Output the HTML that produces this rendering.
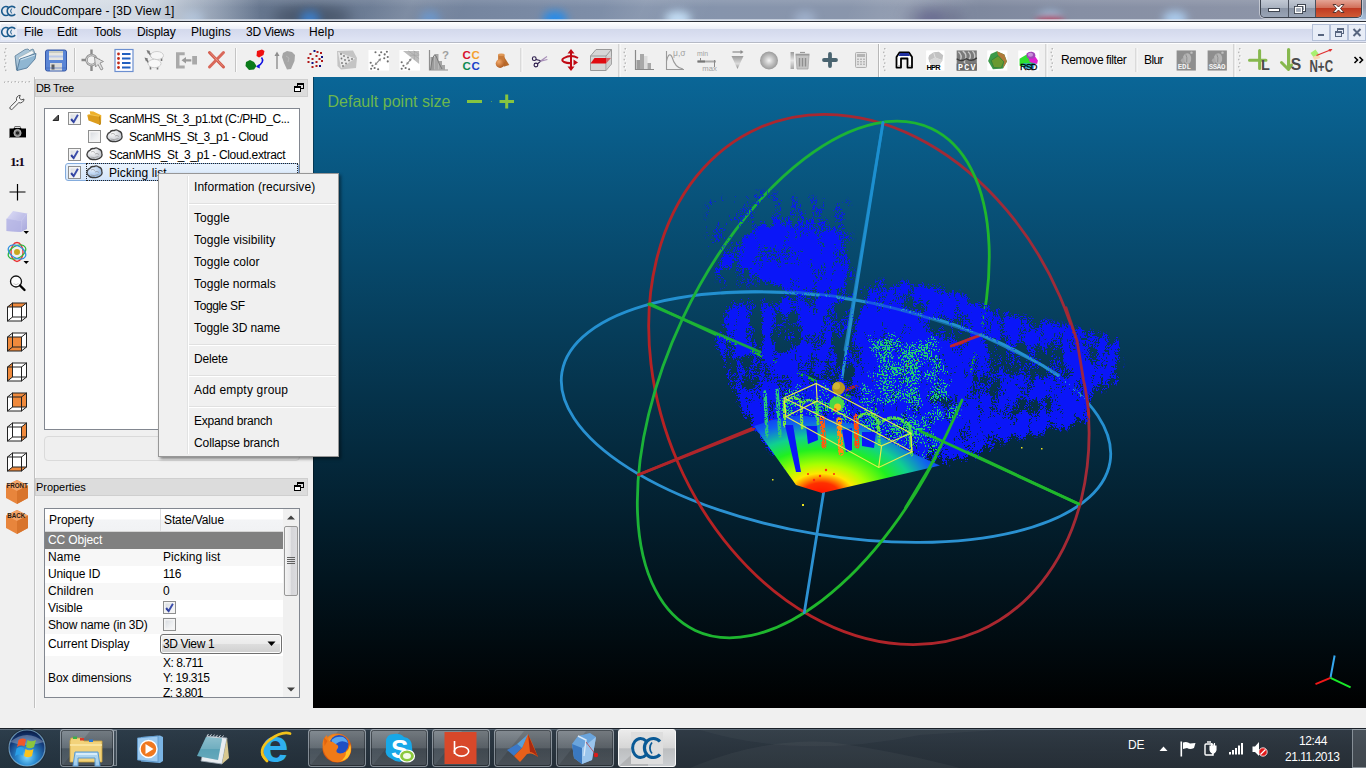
<!DOCTYPE html>
<html>
<head>
<meta charset="utf-8">
<title>CloudCompare - [3D View 1]</title>
<style>
html,body{margin:0;padding:0;}
body{width:1366px;height:768px;overflow:hidden;position:relative;background:#f0f0f0;font-family:"Liberation Sans",sans-serif;font-size:12px;color:#000;}
.abs{position:absolute;}
.t{position:absolute;white-space:nowrap;line-height:14px;}
#titlebar{left:0;top:0;width:1366px;height:21px;overflow:hidden;background:linear-gradient(90deg,#b4c0d0 0px,#a2afc2 120px,#7a8aa2 185px,#66768e 260px,#6a7a92 340px,#7686a0 480px,#7e8ea8 600px,#8694ac 720px,#8a96ac 880px,#7e889e 980px,#868fa4 1080px,#8a92a6 1200px,#9098aa 1366px);}
#titleline{left:0;top:21px;width:1366px;height:1px;background:#2b2f38;}
#menubar{left:0;top:22px;width:1366px;height:21px;box-sizing:border-box;border-bottom:1px solid #b6bac6;background:linear-gradient(#ffffff 0%,#f4f6fb 20%,#eceff8 34%,#d3d9ec 36%,#d9def0 65%,#e1e6f5 100%);}
#toolbar{left:0;top:43px;width:1366px;height:34px;background:#f0f0f0;border-top:1px solid #fff;box-sizing:border-box;}
#leftbar{left:0;top:77px;width:35px;height:631px;background:#f0f0f0;}
#view3d{left:313px;top:77px;width:1053px;height:631px;background:linear-gradient(#0a6697,#000);overflow:hidden;}
#statusbar{left:0;top:708px;width:1366px;height:20px;background:#f0f0f0;}
#taskbar{left:0;top:728px;width:1366px;height:40px;background:#3a4653;}
.docktitle{position:absolute;left:35px;width:273px;height:18px;background:#dcdcdc;border:1px solid #cfcfcf;box-sizing:border-box;}
.box{position:absolute;background:#fff;border:1px solid #828790;box-sizing:border-box;}

.chk{position:absolute;width:13px;height:13px;box-sizing:border-box;border:1px solid #8e8f8f;background:linear-gradient(135deg,#d2d6dc 0%,#eceef0 55%,#fbfbfb 100%);box-shadow:inset 0 0 0 1.500px #f4f4f4;}
.chk svg{position:absolute;left:-1px;top:-1px;}
.tr{font-size:12px;}
</style>
</head>
<body>
<div id="titlebar" class="abs"></div>
<div id="titleline" class="abs"></div>
<div id="menubar" class="abs"></div>
<div id="toolbar" class="abs"></div>
<div id="leftbar" class="abs"></div>
<div id="view3d" class="abs"></div>
<div id="statusbar" class="abs"></div>
<div id="taskbar" class="abs"></div>
<div class="abs" style="left:0;top:0;width:1366px;height:21px;overflow:hidden;">
<div class="abs" style="left:272px;top:6px;width:80px;height:22px;background:#2e3a4c;opacity:.55;filter:blur(7px);border-radius:50%;"></div>
<div class="abs" style="left:905px;top:8px;width:60px;height:20px;background:#4a4a70;opacity:.4;filter:blur(7px);border-radius:50%;"></div>
<div class="abs" style="left:182px;top:11px;width:22px;height:16px;background:#9cc0ea;opacity:0.55;filter:blur(4px);border-radius:50%;"></div>
<div class="abs" style="left:300px;top:11px;width:20px;height:16px;background:#3a86dc;opacity:0.80;filter:blur(4px);border-radius:50%;"></div>
<div class="abs" style="left:420px;top:11px;width:20px;height:16px;background:#5a9ae4;opacity:0.60;filter:blur(4px);border-radius:50%;"></div>
<div class="abs" style="left:543px;top:11px;width:24px;height:16px;background:#1f8cf0;opacity:0.90;filter:blur(4px);border-radius:50%;"></div>
<div class="abs" style="left:665px;top:11px;width:26px;height:16px;background:#c4e0f8;opacity:0.95;filter:blur(4px);border-radius:50%;"></div>
<div class="abs" style="left:794px;top:11px;width:22px;height:16px;background:#b4c8e6;opacity:0.50;filter:blur(4px);border-radius:50%;"></div>
<div class="abs" style="left:918px;top:11px;width:24px;height:16px;background:#5a5a88;opacity:0.50;filter:blur(4px);border-radius:50%;"></div>
<div class="abs" style="left:1038px;top:11px;width:24px;height:16px;background:#b4d0f0;opacity:0.70;filter:blur(4px);border-radius:50%;"></div>
<div class="abs" style="left:1163px;top:11px;width:24px;height:16px;background:#b0d4f8;opacity:0.85;filter:blur(4px);border-radius:50%;"></div>
<div class="abs" style="left:1350px;top:11px;width:20px;height:16px;background:#b0d4f8;opacity:0.70;filter:blur(4px);border-radius:50%;"></div>
<div class="abs" style="left:1035px;top:17px;width:30px;height:8px;background:#b01830;opacity:.8;filter:blur(3px);border-radius:50%;"></div>
<div class="abs" style="left:0;top:0;width:1366px;height:21px;background:linear-gradient(115deg,rgba(255,255,255,0) 0,rgba(255,255,255,0) 27%,rgba(255,255,255,.10) 30%,rgba(255,255,255,0) 34%,rgba(255,255,255,0) 44%,rgba(255,255,255,.08) 47%,rgba(255,255,255,0) 52%,rgba(255,255,255,0) 62%,rgba(255,255,255,.10) 66%,rgba(255,255,255,0) 71%,rgba(255,255,255,0) 100%);"></div>
<div class="abs" style="left:0;top:19px;width:1366px;height:2px;background:linear-gradient(rgba(225,232,242,.55),rgba(235,240,248,.9));"></div>
</div>
<div class="abs" style="left:0;top:0;width:260px;height:21px;background:linear-gradient(90deg,rgba(225,231,238,.95) 0%,rgba(215,222,231,.9) 55%,rgba(200,208,220,0) 100%);"></div>
<div class="abs" style="left:0;top:0;width:1366px;height:21px;background:linear-gradient(rgba(255,255,255,.10) 0%,rgba(255,255,255,0) 35%,rgba(0,0,0,0) 100%);"></div>
<svg class="abs" style="left:1px;top:3px" width="16" height="16" viewBox="0 0 16 16"><rect width="16" height="16" fill="#e3e7ee"/><path d="M7.6 4.6 A4 4.6 0 1 0 7.6 11.4" fill="none" stroke="#1a5a8c" stroke-width="1.5"/><path d="M14.2 4.9 A4.6 4.6 0 1 0 14.2 11.1" fill="none" stroke="#1a5a8c" stroke-width="1.6"/><path d="M10.6 5.6 A3.4 3.6 0 0 0 10.6 10.4" fill="none" stroke="#1a5a8c" stroke-width="1"/></svg>
<div class="t" id="ttl" style="left:21px;top:4px;font-size:12px;letter-spacing:0.03px;">CloudCompare - [3D View 1]</div>
<!-- caption buttons -->
<div class="abs" style="left:1260px;top:0;width:102px;height:18px;border:1px solid #3c434f;border-top:none;border-radius:0 0 5px 5px;box-sizing:border-box;overflow:hidden;box-shadow:0 0 0 1px rgba(255,255,255,.45);">
  <div class="abs" style="left:0;top:0;width:27px;height:17px;background:linear-gradient(#c2c9d4 0%,#a9b2c0 45%,#8b95a6 50%,#99a4b6 100%);border-right:1px solid #4a515e;"></div>
  <div class="abs" style="left:28px;top:0;width:26px;height:17px;background:linear-gradient(#c2c9d4 0%,#a9b2c0 45%,#8b95a6 50%,#99a4b6 100%);border-right:1px solid #4a515e;"></div>
  <div class="abs" style="left:55px;top:0;width:46px;height:17px;background:linear-gradient(#e4a495 0%,#d2705a 45%,#c03a22 50%,#cf5a35 100%);"></div>
</div>
<svg class="abs" style="left:1260px;top:0" width="102" height="18" viewBox="0 0 102 18">
 <rect x="8.5" y="8.5" width="11" height="3" fill="#fff" stroke="#3d4450" stroke-width="1"/>
 <rect x="37.500" y="4.500" width="8" height="7" fill="none" stroke="#3d4450" stroke-width="1"/><rect x="38.5" y="5.500" width="6" height="5" fill="none" stroke="#fff" stroke-width="1"/>
 <rect x="34.500" y="6.500" width="8" height="7" fill="#a4adbb" stroke="#3d4450" stroke-width="1"/><rect x="35.5" y="7.500" width="6" height="5" fill="none" stroke="#fff" stroke-width="1.2"/>
 <path d="M73 4.500 L76 4.500 L78.500 7 L81 4.500 L84 4.500 L80.500 8.500 L84 12.500 L81 12.500 L78.500 10 L76 12.500 L73 12.500 L76.500 8.500 Z" fill="#fff" stroke="#4a2a26" stroke-width="0.9"/>
</svg>

<svg class="abs" style="left:1px;top:24px" width="16" height="16" viewBox="0 0 16 16"><rect width="16" height="16" fill="#e9ecf4"/><path d="M7.6 4.6 A4 4.6 0 1 0 7.6 11.4" fill="none" stroke="#1a5a8c" stroke-width="1.5"/><path d="M14.2 4.9 A4.6 4.6 0 1 0 14.2 11.1" fill="none" stroke="#1a5a8c" stroke-width="1.6"/><path d="M10.6 5.6 A3.4 3.6 0 0 0 10.6 10.4" fill="none" stroke="#1a5a8c" stroke-width="1"/></svg><div class="t mi" id="m0" style="left:24px;top:25px;letter-spacing:-0.04px;">File</div>
<div class="t mi" id="m1" style="left:57px;top:25px;letter-spacing:-0.12px;">Edit</div>
<div class="t mi" id="m2" style="left:94px;top:25px;letter-spacing:-0.24px;">Tools</div>
<div class="t mi" id="m3" style="left:137px;top:25px;letter-spacing:-0.11px;">Display</div>
<div class="t mi" id="m4" style="left:191px;top:25px;letter-spacing:0.05px;">Plugins</div>
<div class="t mi" id="m5" style="left:246px;top:25px;letter-spacing:-0.28px;">3D Views</div>
<div class="t mi" id="m6" style="left:309px;top:25px;letter-spacing:0.13px;">Help</div>
<!-- mdi buttons -->
<svg class="abs" style="left:1312px;top:24px" width="54" height="18" viewBox="0 0 54 18">
 <g fill="#e8edf7" stroke="#b4c0d8" stroke-width="1"><rect x="0.500" y="0.500" width="17" height="16"/><rect x="18.500" y="0.500" width="17" height="16"/><rect x="36.500" y="0.500" width="17" height="16"/></g>
 <rect x="6" y="10" width="6" height="2" fill="#57657f"/>
 <g fill="none" stroke="#57657f" stroke-width="1"><rect x="25.500" y="4.500" width="6" height="5"/><rect x="23.500" y="7.500" width="6" height="5" fill="#dfe6f3"/></g><rect x="25" y="4" width="7" height="2" fill="#57657f"/><rect x="23" y="7" width="7" height="2" fill="#57657f"/>
 <path d="M41.500 5 L48.500 12 M48.500 5 L41.500 12" stroke="#57657f" stroke-width="2" fill="none"/>
</svg>

<!--TB_S--><svg class="abs" style="left:0;top:43px" width="1366" height="34" viewBox="0 43 1366 34">
<rect x="5.0" y="48.0" width="1.500" height="1.500" fill="#b8b8b8"/><rect x="6.5" y="49.0" width="1" height="1" fill="#fff"/><rect x="4.0" y="51.6" width="1.500" height="1.500" fill="#b8b8b8"/><rect x="5.5" y="52.6" width="1" height="1" fill="#fff"/><rect x="5.0" y="55.2" width="1.500" height="1.500" fill="#b8b8b8"/><rect x="6.5" y="56.2" width="1" height="1" fill="#fff"/><rect x="4.0" y="58.8" width="1.500" height="1.500" fill="#b8b8b8"/><rect x="5.5" y="59.8" width="1" height="1" fill="#fff"/><rect x="5.0" y="62.4" width="1.500" height="1.500" fill="#b8b8b8"/><rect x="6.5" y="63.4" width="1" height="1" fill="#fff"/><rect x="4.0" y="66.0" width="1.500" height="1.500" fill="#b8b8b8"/><rect x="5.5" y="67.0" width="1" height="1" fill="#fff"/><rect x="5.0" y="69.6" width="1.500" height="1.500" fill="#b8b8b8"/><rect x="6.5" y="70.6" width="1" height="1" fill="#fff"/><rect x="624.5" y="48.0" width="1.500" height="1.500" fill="#b8b8b8"/><rect x="626.0" y="49.0" width="1" height="1" fill="#fff"/><rect x="623.5" y="51.6" width="1.500" height="1.500" fill="#b8b8b8"/><rect x="625.0" y="52.6" width="1" height="1" fill="#fff"/><rect x="624.5" y="55.2" width="1.500" height="1.500" fill="#b8b8b8"/><rect x="626.0" y="56.2" width="1" height="1" fill="#fff"/><rect x="623.5" y="58.8" width="1.500" height="1.500" fill="#b8b8b8"/><rect x="625.0" y="59.8" width="1" height="1" fill="#fff"/><rect x="624.5" y="62.4" width="1.500" height="1.500" fill="#b8b8b8"/><rect x="626.0" y="63.4" width="1" height="1" fill="#fff"/><rect x="623.5" y="66.0" width="1.500" height="1.500" fill="#b8b8b8"/><rect x="625.0" y="67.0" width="1" height="1" fill="#fff"/><rect x="624.5" y="69.6" width="1.500" height="1.500" fill="#b8b8b8"/><rect x="626.0" y="70.6" width="1" height="1" fill="#fff"/><rect x="884.0" y="48.0" width="1.500" height="1.500" fill="#b8b8b8"/><rect x="885.5" y="49.0" width="1" height="1" fill="#fff"/><rect x="883.0" y="51.6" width="1.500" height="1.500" fill="#b8b8b8"/><rect x="884.5" y="52.6" width="1" height="1" fill="#fff"/><rect x="884.0" y="55.2" width="1.500" height="1.500" fill="#b8b8b8"/><rect x="885.5" y="56.2" width="1" height="1" fill="#fff"/><rect x="883.0" y="58.8" width="1.500" height="1.500" fill="#b8b8b8"/><rect x="884.5" y="59.8" width="1" height="1" fill="#fff"/><rect x="884.0" y="62.4" width="1.500" height="1.500" fill="#b8b8b8"/><rect x="885.5" y="63.4" width="1" height="1" fill="#fff"/><rect x="883.0" y="66.0" width="1.500" height="1.500" fill="#b8b8b8"/><rect x="884.5" y="67.0" width="1" height="1" fill="#fff"/><rect x="884.0" y="69.6" width="1.500" height="1.500" fill="#b8b8b8"/><rect x="885.5" y="70.6" width="1" height="1" fill="#fff"/><rect x="1051.5" y="48.0" width="1.500" height="1.500" fill="#b8b8b8"/><rect x="1053.0" y="49.0" width="1" height="1" fill="#fff"/><rect x="1050.5" y="51.6" width="1.500" height="1.500" fill="#b8b8b8"/><rect x="1052.0" y="52.6" width="1" height="1" fill="#fff"/><rect x="1051.5" y="55.2" width="1.500" height="1.500" fill="#b8b8b8"/><rect x="1053.0" y="56.2" width="1" height="1" fill="#fff"/><rect x="1050.5" y="58.8" width="1.500" height="1.500" fill="#b8b8b8"/><rect x="1052.0" y="59.8" width="1" height="1" fill="#fff"/><rect x="1051.5" y="62.4" width="1.500" height="1.500" fill="#b8b8b8"/><rect x="1053.0" y="63.4" width="1" height="1" fill="#fff"/><rect x="1050.5" y="66.0" width="1.500" height="1.500" fill="#b8b8b8"/><rect x="1052.0" y="67.0" width="1" height="1" fill="#fff"/><rect x="1051.5" y="69.6" width="1.500" height="1.500" fill="#b8b8b8"/><rect x="1053.0" y="70.6" width="1" height="1" fill="#fff"/><rect x="1239.0" y="48.0" width="1.500" height="1.500" fill="#b8b8b8"/><rect x="1240.5" y="49.0" width="1" height="1" fill="#fff"/><rect x="1238.0" y="51.6" width="1.500" height="1.500" fill="#b8b8b8"/><rect x="1239.5" y="52.6" width="1" height="1" fill="#fff"/><rect x="1239.0" y="55.2" width="1.500" height="1.500" fill="#b8b8b8"/><rect x="1240.5" y="56.2" width="1" height="1" fill="#fff"/><rect x="1238.0" y="58.8" width="1.500" height="1.500" fill="#b8b8b8"/><rect x="1239.5" y="59.8" width="1" height="1" fill="#fff"/><rect x="1239.0" y="62.4" width="1.500" height="1.500" fill="#b8b8b8"/><rect x="1240.5" y="63.4" width="1" height="1" fill="#fff"/><rect x="1238.0" y="66.0" width="1.500" height="1.500" fill="#b8b8b8"/><rect x="1239.5" y="67.0" width="1" height="1" fill="#fff"/><rect x="1239.0" y="69.6" width="1.500" height="1.500" fill="#b8b8b8"/><rect x="1240.5" y="70.6" width="1" height="1" fill="#fff"/><rect x="74.0" y="48" width="1" height="24" fill="#c4c4c4"/><rect x="75.0" y="48" width="1" height="24" fill="#fbfbfb"/><rect x="235.0" y="48" width="1" height="24" fill="#c4c4c4"/><rect x="236.0" y="48" width="1" height="24" fill="#fbfbfb"/><rect x="520.5" y="48" width="1" height="24" fill="#c4c4c4"/><rect x="521.5" y="48" width="1" height="24" fill="#fbfbfb"/><rect x="1135.5" y="48" width="1" height="24" fill="#c4c4c4"/><rect x="1136.5" y="48" width="1" height="24" fill="#fbfbfb"/><rect x="618.5" y="44" width="1" height="33" fill="#b8b8b8"/><rect x="619.5" y="44" width="1" height="33" fill="#fdfdfd"/><rect x="878.0" y="44" width="1" height="33" fill="#b8b8b8"/><rect x="879.0" y="44" width="1" height="33" fill="#fdfdfd"/><rect x="1045.5" y="44" width="1" height="33" fill="#b8b8b8"/><rect x="1046.5" y="44" width="1" height="33" fill="#fdfdfd"/><rect x="1233.5" y="44" width="1" height="33" fill="#b8b8b8"/><rect x="1234.5" y="44" width="1" height="33" fill="#fdfdfd"/><g transform="translate(13.0 48)"><path d="M2 8 L3 22 L5 23 L2.500 9 Z" fill="#6f8fa8"/><path d="M2 8 L12 1.500 L15 1 L16.500 2.500 L20 1 L21 3 L22 6 L12 12 L4 22 Z" fill="#a8c4d8" stroke="#5d7f99" stroke-width=".8"/><path d="M5 10 L19 2.500 L21 5 L8 13 Z" fill="#f4f6f8" stroke="#9aa" stroke-width=".5"/><path d="M4 22.500 L7 11 L23 5.500 L22 11 L14 20 Z" fill="#8fb6d2" stroke="#55799a" stroke-width=".9"/><path d="M7.500 12 L22 7" stroke="#cfe2ee" stroke-width="1"/></g>
<g transform="translate(44.0 48)"><rect x="1.500" y="2" width="21" height="21" rx="2" fill="#5b86d6" stroke="#3557a5" stroke-width="1"/><rect x="5" y="3" width="14" height="9" fill="#e6e6e0"/><rect x="5" y="7.500" width="14" height="2" fill="#b9c8e8"/><rect x="5" y="3" width="14" height="2" fill="#c9cdc4"/><rect x="6" y="15" width="12" height="7.500" fill="#d9d9d9"/><rect x="7.500" y="16.500" width="3" height="5" fill="#5a5a5a"/><path d="M1.500 20 L22.500 20" stroke="#3f64b5" stroke-width=".6"/></g>
<g transform="translate(81.0 48)"><g fill="none" stroke="#8a8a8a" stroke-width="2.400"><circle cx="10.500" cy="12" r="5"/><path d="M10.500 1.500 V7 M10.500 17 V23 M0.500 12 H5.500 M15.500 12 H19"/></g><g fill="none" stroke="#e8e8e8" stroke-width=".8"><circle cx="10.500" cy="12" r="5"/></g><path d="M13.500 9 L22.500 13.500 L19 15 L22 21 L20 22 L17 16.500 L14.500 19 Z" fill="#e0e0e0" stroke="#8c8c8c" stroke-width=".9"/></g>
<g transform="translate(112.0 48)"><rect x="3" y="1.500" width="18" height="22" fill="#fdfdff" stroke="#6c8fd0" stroke-width="1.200"/><g fill="#c02a1a"><circle cx="6.500" cy="6" r="1.400"/><circle cx="6.500" cy="10.500" r="1.400"/><circle cx="6.500" cy="15" r="1.400"/><circle cx="6.500" cy="19.500" r="1.400"/></g><g stroke="#1f5fc0" stroke-width="1.800"><path d="M10 6 H18.500 M10 10.500 H18.500 M10 15 H18.500 M10 19.500 H18.500"/></g></g>
<g transform="translate(143.0 48)"><g stroke="#777" stroke-width="1.600" fill="none"><path d="M5.500 4 L9 9 M3.500 11.500 L7 17 M7.500 21.500 L7.500 18 M14.500 21.500 L14.500 18 M18.500 13 L18.500 9.500"/></g><ellipse cx="14" cy="7.500" rx="6.500" ry="4" fill="#f6f6f6" stroke="#c4c4c4" stroke-width=".8"/><ellipse cx="11.500" cy="15.500" rx="6.500" ry="4.200" fill="#f8f8f8" stroke="#c4c4c4" stroke-width=".8"/><path d="M3.500 2 l3.500 1 l-2 3 z M1.500 9.500 l3.500 1 l-2 3 z" fill="#777"/></g>
<g transform="translate(174.0 48)"><path d="M2 4.200 H10.700 V7.200 H5.500 V17.600 H10.700 V20.600 H2 Z" fill="#a9a9a9"/><rect x="18.200" y="8" width="4.800" height="8.500" fill="#a9a9a9"/><path d="M7.500 12.300 L12 9 V11.200 H17.300 V13.400 H12 V15.600 Z" fill="#9a9a9a"/></g>
<g transform="translate(205.0 48)"><path d="M4.500 4.500 L18.500 19" stroke="#d35a4a" stroke-width="3" stroke-linecap="round"/><path d="M18.500 4.500 L4.500 19" stroke="#d9685a" stroke-width="3" stroke-linecap="round"/><path d="M5 4.500 L18 18.500" stroke="#eea398" stroke-width=".7"/></g>
<g transform="translate(242.0 48)"><path d="M15 3 L20 1.500 L22.500 3 L21.500 7 L17 9.500 L14.500 8 Z" fill="#f01010"/><path d="M4 14 L8 12 L12 14 L14.500 18 L12 21.500 L7 22 L3.500 18 Z" fill="#0a7a1a"/><path d="M19.500 9.500 Q23 14 15.500 18.500" fill="none" stroke="#1010e0" stroke-width="1.600"/><path d="M14 18.800 L17.500 16 L17.800 20.500 Z" fill="#1010e0"/></g>
<g transform="translate(273.0 48)"><path d="M4 21 V5" stroke="#8e8e8e" stroke-width="1.400"/><path d="M1.500 8 L4 3.500 L6.500 8 Z" fill="#8e8e8e"/><path d="M10 5 L14 3 L19 4 L22 7 L21.500 13 L18 21 L14 21.500 L11 15 L9 9 Z" fill="#a5a5a5"/><path d="M13 8 l3 2 l-1 4" stroke="#b8b8b8" fill="none"/></g>
<g transform="translate(304.0 48)"><rect x="9.5" y="2.0" width="2" height="2" fill="#101080"/><rect x="12.5" y="3.0" width="2" height="2" fill="#b01818"/><rect x="16.0" y="4.0" width="2" height="2" fill="#b01818"/><rect x="5.5" y="5.0" width="2" height="2" fill="#b01818"/><rect x="11.5" y="7.0" width="2" height="2" fill="#b01818"/><rect x="17.0" y="8.0" width="2" height="2" fill="#101080"/><rect x="3.5" y="9.0" width="2" height="2" fill="#b01818"/><rect x="7.5" y="10.0" width="2" height="2" fill="#b01818"/><rect x="14.5" y="10.0" width="2" height="2" fill="#b01818"/><rect x="17.0" y="12.0" width="2" height="2" fill="#b01818"/><rect x="3.5" y="13.0" width="2" height="2" fill="#b01818"/><rect x="7.5" y="14.0" width="2" height="2" fill="#101080"/><rect x="11.5" y="13.0" width="2" height="2" fill="#b01818"/><rect x="7.5" y="18.0" width="2" height="2" fill="#b01818"/><rect x="11.5" y="17.0" width="2" height="2" fill="#b01818"/><rect x="15.0" y="17.0" width="2" height="2" fill="#101080"/></g>
<g transform="translate(335.0 48)"><path d="M2 3 L18 2.500 L22 10 L21 20 L6 21.500 L2.500 18 Z" fill="#c4c4c4"/><path d="M3 4 L20 10.500 L6 20 Z" fill="#e9e9e9"/><g fill="#777"><circle cx="6" cy="6" r=".9"/><circle cx="9" cy="8" r=".9"/><circle cx="13" cy="9.500" r=".9"/><circle cx="6.500" cy="10.500" r=".9"/><circle cx="10" cy="12" r=".9"/><circle cx="14" cy="12.500" r=".9"/><circle cx="7" cy="15" r=".9"/><circle cx="11" cy="15.500" r=".9"/><circle cx="8" cy="18" r=".9"/><circle cx="17" cy="11" r=".9"/></g></g>
<g transform="translate(366.0 48)"><g transform="translate(2.5 2) scale(0.875)"><rect x="0" y="0" width="23.500" height="23.500" fill="#fff"/><circle cx="8.0" cy="2.5" r="1.200" fill="#6e6e6e"/><circle cx="14.5" cy="2.5" r="1.200" fill="#6e6e6e"/><circle cx="21.0" cy="2.0" r="1.200" fill="#6e6e6e"/><circle cx="12.5" cy="6.0" r="1.200" fill="#6e6e6e"/><circle cx="18.5" cy="5.0" r="1.200" fill="#6e6e6e"/><circle cx="22.0" cy="8.0" r="1.200" fill="#6e6e6e"/><circle cx="18.0" cy="9.5" r="1.200" fill="#6e6e6e"/><circle cx="22.0" cy="13.0" r="1.200" fill="#6e6e6e"/><circle cx="2.5" cy="14.5" r="1.200" fill="#6e6e6e"/><circle cx="4.5" cy="18.0" r="1.200" fill="#6e6e6e"/><circle cx="7.0" cy="20.5" r="1.200" fill="#6e6e6e"/><circle cx="3.0" cy="21.5" r="1.200" fill="#6e6e6e"/><circle cx="11.0" cy="22.0" r="1.200" fill="#6e6e6e"/><path d="M8 16.500 L13.500 10.500" stroke="#8c8c8c" stroke-width="1.300"/><path d="M7 17.500 l1 -3.500 l2.300 2.300 z M14.500 9.500 l-1 3.500 l-2.300 -2.300 z" fill="#8c8c8c"/></g></g>
<g transform="translate(397.0 48)"><g transform="translate(2.5 2) scale(0.875)"><rect x="0" y="0" width="23.500" height="23.500" fill="#fff"/><path d="M4 1 L22.500 1 L22.500 16 Z" fill="#bdbdbd"/><path d="M10 1 L22.500 10 M16 1 L22.500 5 M12 6 L22.500 6 M17 1 V11" stroke="#a2a2a2" stroke-width=".7"/><circle cx="2.5" cy="14.0" r="1.200" fill="#6e6e6e"/><circle cx="4.5" cy="18.0" r="1.200" fill="#6e6e6e"/><circle cx="2.5" cy="21.5" r="1.200" fill="#6e6e6e"/><circle cx="7.0" cy="20.5" r="1.200" fill="#6e6e6e"/><circle cx="11.0" cy="22.0" r="1.200" fill="#6e6e6e"/><path d="M8.500 16 L13 10.500" stroke="#8c8c8c" stroke-width="1.300"/><path d="M7.500 17 l1 -3.500 l2.300 2.300 z M14 9.500 l-1 3.500 l-2.300 -2.300 z" fill="#8c8c8c"/></g></g>
<g transform="translate(428.0 48)"><path d="M1.500 2 V22 H20" fill="none" stroke="#8e8e8e" stroke-width="1.200"/><rect x="2.500" y="9" width="4" height="13" fill="#9c9c9c"/><rect x="6.500" y="6" width="4" height="16" fill="#a6a6a6"/><rect x="10.500" y="13" width="3.500" height="9" fill="#a6a6a6"/><rect x="14" y="17" width="3" height="5" fill="#a6a6a6"/><path d="M2.500 22 Q5 3 8 8 Q11 16 14 21" fill="none" stroke="#7a7a7a" stroke-width="1"/><text x="14" y="11" font-family="Liberation Sans, sans-serif" font-size="11.500" font-weight="bold" fill="#a0a0a0">?</text></g>
<g transform="translate(459.0 48)"><text x="3.5" y="10.5" font-family="Liberation Sans, sans-serif" font-weight="bold" font-size="11.500" fill="#d8102c">C</text><text x="12.5" y="10.5" font-family="Liberation Sans, sans-serif" font-weight="bold" font-size="11.500" fill="#f5a030">C</text><text x="3.5" y="21.5" font-family="Liberation Sans, sans-serif" font-weight="bold" font-size="11.500" fill="#0f8a50">C</text><text x="12.5" y="21.5" font-family="Liberation Sans, sans-serif" font-weight="bold" font-size="11.500" fill="#2040c8">C</text></g>
<g transform="translate(490.0 48)"><defs><radialGradient id="pg" cx=".35" cy=".3" r=".8"><stop offset="0" stop-color="#f2a868"/><stop offset="1" stop-color="#a8541a"/></radialGradient></defs><g transform="translate(2.5 3.500) scale(0.8)"><path d="M14 6 L21 17 L14 19 Z" fill="#b86a2a"/><path d="M7 4 Q11 2.500 15 4 V13 H7 Z" fill="#c97a38"/><ellipse cx="11" cy="4" rx="4" ry="1.500" fill="#e09a58"/><circle cx="9.500" cy="15" r="5.500" fill="url(#pg)"/></g></g>
<g transform="translate(527.0 48)"><g transform="translate(3 3) scale(0.85)"><circle cx="5" cy="9" r="2.200" fill="none" stroke="#2a1a4a" stroke-width="1.300"/><circle cx="7" cy="16.500" r="2.200" fill="none" stroke="#2a1a4a" stroke-width="1.300"/><path d="M7 10 L13 11.500 M9 15 L13 11.500" stroke="#2a1a4a" stroke-width="1.200"/><path d="M12 12 L20 6.500 M12.500 12 L20.500 10" stroke="#a890b8" stroke-width="1.400"/></g></g>
<g transform="translate(559.0 48)"><g stroke="#c00a14" fill="none" stroke-width="2"><path d="M12 3 V21"/><path d="M19 10 Q12 6 5 10 Q1.500 12 5 14 Q9 15.500 13 15"/></g><path d="M8.500 5.500 L12 1 L15.500 5.500 Z M8.500 18.500 L12 23 L15.500 18.500 Z M14.500 11.500 L19 14.500 L14.500 17.500 Z" fill="#c00a14"/></g>
<g transform="translate(589.0 48)"><path d="M1.500 8 L7 1.500 H22.500 V16 L17 22.500 H1.500 Z" fill="#d6d6d6" stroke="#9a9a9a" stroke-width="1"/><path d="M1.500 8 H17 L22.500 1.500 M17 8 V22.500" fill="none" stroke="#9a9a9a" stroke-width="1"/><path d="M1.500 15.500 L5.500 10 H22 L17 15.500 Z" fill="#e00a10"/><path d="M17 8 H22.500 V16 L17 22.500 Z" fill="#c8c8c8" fill-opacity=".45"/></g>
<g transform="translate(632.0 48)"><path d="M3.500 2 V21.500 H22" fill="none" stroke="#8a8a8a" stroke-width="1.200"/><rect x="4.500" y="12" width="3.500" height="9" fill="#9c9c9c"/><rect x="8" y="6" width="4" height="15" fill="#a8a8a8"/><rect x="12" y="8" width="3.500" height="13" fill="#dcdcdc"/><rect x="15.500" y="15" width="3.500" height="6" fill="#a8a8a8"/></g>
<g transform="translate(663.0 48)"><path d="M3.500 3 V21.500 H21" fill="none" stroke="#9a9a9a" stroke-width="1.100"/><path d="M3.500 13 Q6 3 9 9 Q12 20 20 21" fill="none" stroke="#9a9a9a" stroke-width="1.100"/><text x="10" y="8" font-family="Liberation Sans, sans-serif" font-size="9" fill="#a2a2a2" textLength="12.500" lengthAdjust="spacingAndGlyphs">μ,σ</text></g>
<g transform="translate(694.0 48)"><text x="3" y="8" font-family="Liberation Sans, sans-serif" font-size="8" fill="#a2a2a2" textLength="11" lengthAdjust="spacingAndGlyphs">min</text><text x="8.300" y="23" font-family="Liberation Sans, sans-serif" font-size="8" fill="#a2a2a2" textLength="14.500" lengthAdjust="spacingAndGlyphs">max</text><path d="M3.500 13.500 H22" stroke="#aaa" stroke-width="2"/><path d="M3.500 13.500 H11" stroke="#777" stroke-width="2"/><path d="M6.500 10 V13 M20.500 12 V19" stroke="#8a8a8a" stroke-width="1"/></g>
<g transform="translate(725.0 48)"><defs><linearGradient id="fg" x1="0" y1="0" x2="0" y2="1"><stop offset="0" stop-color="#9a9a9a"/><stop offset=".6" stop-color="#dcdcdc"/><stop offset="1" stop-color="#8a8a8a"/></linearGradient></defs><path d="M6.500 8 H18.500 L12.500 21 Z" fill="url(#fg)"/><path d="M7.500 4 H17" stroke="#8a8a8a" stroke-width="1.200"/><path d="M15.500 2 L18.500 4 L15.500 6 Z" fill="#8a8a8a"/></g>
<g transform="translate(757.0 48)"><defs><radialGradient id="sg" cx=".5" cy=".5" r=".5"><stop offset="0" stop-color="#f4f4f4"/><stop offset=".5" stop-color="#c4c4c4"/><stop offset="1" stop-color="#9a9a9a"/></radialGradient></defs><circle cx="12" cy="12.500" r="9" fill="url(#sg)"/></g>
<g transform="translate(788.0 48)"><defs><linearGradient id="tg" x1="0" y1="0" x2="0" y2="1"><stop offset="0" stop-color="#9a9a9a"/><stop offset=".5" stop-color="#e6e6e6"/><stop offset="1" stop-color="#a6a6a6"/></linearGradient></defs><rect x="2.500" y="4" width="3.500" height="17" fill="url(#tg)"/><path d="M8 7 H21 L20 21 H9 Z" fill="#c4c4c4" stroke="#a4a4a4" stroke-width=".8"/><path d="M7.500 6.500 H21.500" stroke="#9a9a9a" stroke-width="1.600"/><path d="M12 4.500 H17" stroke="#9a9a9a" stroke-width="1.200"/><path d="M11.500 10 V18.500 M14.500 10 V18.500 M17.500 10 V18.500" stroke="#8e8e8e" stroke-width="1.400"/></g>
<g transform="translate(818.0 48)"><path d="M12 6 V18 M6 12 H18" stroke="#4a6470" stroke-width="3.800" stroke-linecap="round"/></g>
<g transform="translate(850.0 48)"><rect x="5.500" y="4.500" width="11" height="15" rx="1" fill="#e4e4e4" stroke="#b0b0b0" stroke-width="1"/><rect x="7" y="6" width="8" height="3" fill="#b4b4b4"/><g fill="#b8b8b8"><rect x="7" y="10.500" width="2" height="1.500"/><rect x="10" y="10.500" width="2" height="1.500"/><rect x="13" y="10.500" width="2" height="1.500"/><rect x="7" y="13" width="2" height="1.500"/><rect x="10" y="13" width="2" height="1.500"/><rect x="13" y="13" width="2" height="1.500"/><rect x="7" y="15.500" width="2" height="1.500"/><rect x="10" y="15.500" width="2" height="1.500"/><rect x="13" y="15.500" width="2" height="1.500"/></g></g>
<g transform="translate(892.0 48)"><path d="M4.500 9 L7.500 4.500 H17 L20 9 V19.500 H15.500 V10.500 H9 V19.500 H4.500 Z" fill="#fff" stroke="#000" stroke-width="1.800" stroke-linejoin="round"/><path d="M6.500 8 L8 5 H16.500 L18 8 Z" fill="#2030a0"/><path d="M5.500 17 H8 V18.800 H5.500 Z M16.500 17 H19 V18.800 H16.500 Z" fill="#d0d0d0"/></g>
<g transform="translate(923.0 48)"><g transform="translate(1.8 2) scale(0.875)"><rect x="1.500" y="0.500" width="21" height="23" fill="#fff"/><path d="M5 6 L10 2.500 L16 2 L21 6 L20 12 L16 18 L9 19 L5 13 L4 9 Z" fill="#c2c2c2"/><path d="M10 2.500 L12 9 L20 12 M12 9 L6 12 L9 19" stroke="#e4e4e4" stroke-width="1" fill="none"/><path d="M12 9 L20 12 L16 18 L9 19 L6 12 Z" fill="#d8d8d8"/><text x="2" y="22.500" font-family="Liberation Sans, sans-serif" font-weight="bold" font-size="8.500" fill="#000" textLength="16">HPR</text></g></g>
<g transform="translate(954.0 48)"><g transform="translate(1.8 2) scale(0.875)"><rect x="1" y="0.500" width="23" height="23" fill="#7a7a7a"/><path d="M3 2 Q8 6 5 12 M8 1 Q14 6 10 12 Q9 15 12 17 M14 2 Q19 6 15 11 M19 1 Q23 5 21 11" stroke="#c8c8c8" stroke-width="1.600" fill="none"/><path d="M1 10 Q6 14 12 10 Q18 14 24 9" stroke="#3a3a3a" stroke-width="1.500" fill="none"/><rect x="1" y="15.500" width="23" height="8" fill="#6a6a6a"/><text x="2.500" y="22.800" font-family="Liberation Mono, monospace" font-weight="bold" font-size="9.500" fill="#fff" textLength="20">PCV</text></g></g>
<g transform="translate(985.0 48)"><g transform="translate(1.8 2) scale(0.875)"><rect x="0.500" y="0.500" width="23" height="23" fill="#fff"/><path d="M11.500 1.500 L20 5 L23 13 L18.500 21 L7 22 L1.500 12.500 L4.500 4.500 Z" fill="#3d9a4a"/><path d="M11.500 1.500 L20 5 L23 13 L18.500 21 L19.500 13.500 L13 6.500 Z" fill="#b07a3a"/><path d="M13 6.500 L19.500 13.500 L16.500 20.500 L8 20 L5 12 Z" fill="#6a9a30" stroke="#2d7a3a" stroke-width=".8"/></g></g>
<g transform="translate(1016.0 48)"><g transform="translate(1.8 2) scale(0.875)"><rect x="0.500" y="0.500" width="24" height="23" fill="#fff"/><path d="M2 10 L12 4 L22 14 L14 21 L2 18 Z" fill="#30e030"/><path d="M10 4 L16 2 L23 12 L22 16 L14 14 Z" fill="#e020d0"/><ellipse cx="15" cy="6" rx="5" ry="4" fill="#a048b8"/><ellipse cx="14.500" cy="5.500" rx="3" ry="2.300" fill="#c890d8"/><path d="M6 15 L20 15 L18 22 L6 21 Z" fill="#30a0e0" fill-opacity=".8"/><text x="2.500" y="22.500" font-family="Liberation Sans, sans-serif" font-size="10.500" fill="#000" textLength="20" stroke="#000" stroke-width=".3">RSD</text></g></g>
<g transform="translate(1173.5 48)"><g transform="translate(1.8 2) scale(0.875)"><rect x="1.500" y="0.500" width="22" height="23" fill="#8e8e8e"/><path d="M9 7 Q11 3 15 4 Q19 6 18 12 Q17 16 13 16 Q10 14 9 11 Z" fill="#b4b4b4"/><path d="M6 12 Q8 8 10 10 Q12 14 9 16 Z" fill="#aaaaaa"/><circle cx="18.500" cy="3" r="1.400" fill="#c0c0c0"/><path d="M12 5 Q14 8 13 14" stroke="#8a8a8a" fill="none"/><text x="2.800" y="22" font-family="Liberation Mono, monospace" font-weight="bold" font-size="8.500" fill="#f4f4f4" textLength="15">EDL</text></g></g>
<g transform="translate(1204.5 48)"><g transform="translate(1.8 2) scale(0.875)"><rect x="1.500" y="0.500" width="22" height="23" fill="#8e8e8e"/><path d="M9 7 Q11 3 15 4 Q19 6 18 12 Q17 16 13 16 Q10 14 9 11 Z" fill="#b4b4b4"/><path d="M6 12 Q8 8 10 10 Q12 14 9 16 Z" fill="#aaaaaa"/><circle cx="18.500" cy="3" r="1.400" fill="#c0c0c0"/><path d="M12 5 Q14 8 13 14" stroke="#8a8a8a" fill="none"/><text x="2.800" y="22" font-family="Liberation Mono, monospace" font-weight="bold" font-size="8.500" fill="#f4f4f4" textLength="19">SSAO</text></g></g>
<g transform="translate(1248.0 48)"><path d="M11.600 2.500 V20.500 M1.500 12.200 H18" stroke="#86b84e" stroke-width="3" stroke-linecap="round"/><text x="13" y="21.500" font-family="Liberation Sans, sans-serif" font-weight="bold" font-size="14.500" fill="#4a4a4a">L</text></g>
<g transform="translate(1279.0 48)"><path d="M9.600 1.500 V20" stroke="#86b84e" stroke-width="3.200" stroke-linecap="round"/><path d="M2.500 14.500 L9.500 21.500 L12.500 17" fill="none" stroke="#86b84e" stroke-width="3" stroke-linecap="round" stroke-linejoin="round"/><text x="11.800" y="21.800" font-family="Liberation Sans, sans-serif" font-weight="bold" font-size="16.500" fill="#4a4a4a" textLength="10.500" lengthAdjust="spacingAndGlyphs">S</text></g>
<g transform="translate(1309.5 48)"><path d="M1 5 L6 1.500 L10 7 L4.500 10 Z" fill="#a8f070"/><path d="M3 9 L9 6.500 L11 10 L5 12 Z" fill="#f8d8b0"/><path d="M7 7.500 L22 1.500" stroke="#e03030" stroke-width="1.200"/><path d="M23 1 L19 1.200 L20.500 4 Z" fill="#e03030"/><text x="0" y="23.500" font-family="Liberation Sans, sans-serif" font-weight="bold" font-size="17" fill="#4a4a4a" textLength="23.500" lengthAdjust="spacingAndGlyphs">N+C</text></g>
<path d="M1354.500 57 L1357.500 60 L1354.500 63 M1359.500 57 L1362.500 60 L1359.500 63" fill="none" stroke="#000" stroke-width="1.600"/>
</svg>
<div class="t" style="left:1061px;top:53px;letter-spacing:-0.42px;" id="tb0">Remove filter</div><div class="t" style="left:1144px;top:53px;letter-spacing:-0.61px;" id="tb1">Blur</div>
<!--TB_E-->
<!--LB_S--><svg class="abs" style="left:0;top:77px" width="36" height="631" viewBox="0 77 36 631">
<rect x="34" y="77" width="1" height="631" fill="#c0c0c0"/><rect x="35" y="77" width="1" height="631" fill="#fafafa"/><rect x="4.0" y="81.5" width="1.500" height="1.500" fill="#b8b8b8"/><rect x="5.2" y="82.0" width="1" height="1" fill="#fff"/><rect x="7.5" y="81.0" width="1.500" height="1.500" fill="#b8b8b8"/><rect x="8.7" y="82.0" width="1" height="1" fill="#fff"/><rect x="11.0" y="81.5" width="1.500" height="1.500" fill="#b8b8b8"/><rect x="12.2" y="82.0" width="1" height="1" fill="#fff"/><rect x="14.5" y="81.0" width="1.500" height="1.500" fill="#b8b8b8"/><rect x="15.7" y="82.0" width="1" height="1" fill="#fff"/><rect x="18.0" y="81.5" width="1.500" height="1.500" fill="#b8b8b8"/><rect x="19.2" y="82.0" width="1" height="1" fill="#fff"/><rect x="21.5" y="81.0" width="1.500" height="1.500" fill="#b8b8b8"/><rect x="22.7" y="82.0" width="1" height="1" fill="#fff"/><rect x="25.0" y="81.5" width="1.500" height="1.500" fill="#b8b8b8"/><rect x="26.2" y="82.0" width="1" height="1" fill="#fff"/><rect x="28.5" y="81.0" width="1.500" height="1.500" fill="#b8b8b8"/><rect x="29.7" y="82.0" width="1" height="1" fill="#fff"/><g transform="translate(17 102.300) rotate(-45) scale(0.84)"><path d="M-9.500 -1.800 L1.200 -1.800 A4.600 4.600 0 0 1 8.600 -3.200 L5.600 -1.600 L5.600 1.600 L8.600 3.200 A4.600 4.600 0 0 1 1.200 1.800 L-9.500 1.800 A1.800 1.800 0 0 1 -9.500 -1.800 Z" fill="#f6f6f6" stroke="#4a4a4a" stroke-width="1.100"/></g><g><path d="M9.500 128.500 H13.500 L15 126 H20 L21.500 128.500 H26 V138 H9.500 Z" fill="#000"/><rect x="14.500" y="126.500" width="6" height="1.500" fill="#ddd"/><circle cx="17.500" cy="133" r="3.600" fill="#8a8a8a" stroke="#ccc" stroke-width=".8"/><circle cx="17.500" cy="133" r="1.800" fill="#222"/><rect x="9.500" y="137" width="16.500" height="1" fill="#888"/></g><text x="10" y="166" font-family="Liberation Serif, serif" font-weight="bold" font-size="13.500" fill="#1a0a1a" textLength="15">1:1</text><path d="M17.500 184 V200.500 M9.500 192 H25.500" stroke="#000" stroke-width="1.200"/><defs><linearGradient id="lc1" x1="0" y1="0" x2="1" y2="1"><stop offset="0" stop-color="#dcdcf6"/><stop offset="1" stop-color="#a8a8dc"/></linearGradient></defs>
<path d="M6.500 219 L13 211 L27 213.500 L27 229 L21 232 L6.500 231 Z" fill="url(#lc1)"/><path d="M6.500 219 L21 221 L27 213.500 M21 221 L21 232" stroke="#c8c8ee" stroke-width=".8" fill="none"/><path d="M6.500 219 L21 221 L21 232 L6.500 231 Z" fill="#b4b4e4" fill-opacity=".7"/><path d="M23.500 231 H29 L26.200 234 Z" fill="#000"/><g fill="none" stroke-width="1.300"><ellipse cx="17" cy="252" rx="6" ry="9.500" stroke="#e83030"/><ellipse cx="17" cy="252" rx="6" ry="9.500" transform="rotate(60 17 252)" stroke="#30b840"/><ellipse cx="17" cy="252" rx="6" ry="9.500" transform="rotate(-60 17 252)" stroke="#3090e0"/></g><circle cx="17" cy="252" r="3" fill="#c8a820"/><path d="M23.500 261 H29 L26.200 264 Z" fill="#000"/><circle cx="16" cy="281.500" r="5.500" fill="#fdfdfd" stroke="#111" stroke-width="1.300"/><path d="M13.500 283.500 Q16 286 18.500 283.500" stroke="#bbb" fill="none" stroke-width=".8"/><path d="M20 285.500 L24.500 290" stroke="#000" stroke-width="2.400" stroke-linecap="round"/><rect x="12.5" y="303.0" width="14" height="14" fill="#fff"/><rect x="7.5" y="307.0" width="14" height="14" fill="#fff"/><polygon points="7.5,307.0 21.5,307.0 26.5,303.0 12.5,303.0" fill="#f08a3c"/><g fill="none" stroke="#222" stroke-width="1"><rect x="12.5" y="303.0" width="14" height="14"/><rect x="7.5" y="307.0" width="14" height="14"/><path d="M7.5 307.0 L12.5 303.0 M21.5 307.0 L26.5 303.0 M7.5 321.0 L12.5 317.0 M21.5 321.0 L26.5 317.0"/></g>
<rect x="12.5" y="333.0" width="14" height="14" fill="#fff"/><rect x="7.5" y="337.0" width="14" height="14" fill="#fff"/><polygon points="7.5,337.0 21.5,337.0 21.5,351.0 7.5,351.0" fill="#f08a3c"/><g fill="none" stroke="#222" stroke-width="1"><rect x="12.5" y="333.0" width="14" height="14"/><rect x="7.5" y="337.0" width="14" height="14"/><path d="M7.5 337.0 L12.5 333.0 M21.5 337.0 L26.5 333.0 M7.5 351.0 L12.5 347.0 M21.5 351.0 L26.5 347.0"/></g>
<rect x="12.5" y="363.0" width="14" height="14" fill="#fff"/><rect x="7.5" y="367.0" width="14" height="14" fill="#fff"/><polygon points="7.5,367.0 12.5,363.0 12.5,377.0 7.5,381.0" fill="#f08a3c"/><g fill="none" stroke="#222" stroke-width="1"><rect x="12.5" y="363.0" width="14" height="14"/><rect x="7.5" y="367.0" width="14" height="14"/><path d="M7.5 367.0 L12.5 363.0 M21.5 367.0 L26.5 363.0 M7.5 381.0 L12.5 377.0 M21.5 381.0 L26.5 377.0"/></g>
<rect x="12.5" y="393.0" width="14" height="14" fill="#fff"/><rect x="7.5" y="397.0" width="14" height="14" fill="#fff"/><polygon points="12.5,393.0 26.5,393.0 26.5,407.0 12.5,407.0" fill="#f08a3c"/><g fill="none" stroke="#222" stroke-width="1"><rect x="12.5" y="393.0" width="14" height="14"/><rect x="7.5" y="397.0" width="14" height="14"/><path d="M7.5 397.0 L12.5 393.0 M21.5 397.0 L26.5 393.0 M7.5 411.0 L12.5 407.0 M21.5 411.0 L26.5 407.0"/></g>
<rect x="12.5" y="423.0" width="14" height="14" fill="#fff"/><rect x="7.5" y="427.0" width="14" height="14" fill="#fff"/><polygon points="21.5,427.0 26.5,423.0 26.5,437.0 21.5,441.0" fill="#f08a3c"/><g fill="none" stroke="#222" stroke-width="1"><rect x="12.5" y="423.0" width="14" height="14"/><rect x="7.5" y="427.0" width="14" height="14"/><path d="M7.5 427.0 L12.5 423.0 M21.5 427.0 L26.5 423.0 M7.5 441.0 L12.5 437.0 M21.5 441.0 L26.5 437.0"/></g>
<rect x="12.5" y="453.0" width="14" height="14" fill="#fff"/><rect x="7.5" y="457.0" width="14" height="14" fill="#fff"/><polygon points="7.5,471.0 21.5,471.0 26.5,467.0 12.5,467.0" fill="#f08a3c"/><g fill="none" stroke="#222" stroke-width="1"><rect x="12.5" y="453.0" width="14" height="14"/><rect x="7.5" y="457.0" width="14" height="14"/><path d="M7.5 457.0 L12.5 453.0 M21.5 457.0 L26.5 453.0 M7.5 471.0 L12.5 467.0 M21.5 471.0 L26.5 467.0"/></g>
<path d="M17.0 480.0 L28 485.5 L28 498.0 L17.0 504.0 L6 498.0 L6 485.5 Z" fill="#e8853c"/><path d="M17.0 480.0 L28 485.5 L17.0 491.0 L6 485.5 Z" fill="#f4a468"/><path d="M17.0 491.0 L28 485.5 L28 498.0 L17.0 504.0 Z" fill="#d8742c"/><text x="6.4" y="488.3" font-family="Liberation Sans, sans-serif" font-weight="bold" font-size="7" fill="#2a1a10" textLength="21.5" lengthAdjust="spacingAndGlyphs">FRONT</text><path d="M17.0 510.0 L28 515.5 L28 528.0 L17.0 534.0 L6 528.0 L6 515.5 Z" fill="#e8853c"/><path d="M17.0 510.0 L28 515.5 L17.0 521.0 L6 515.5 Z" fill="#f4a468"/><path d="M17.0 521.0 L28 515.5 L28 528.0 L17.0 534.0 Z" fill="#d8742c"/><text x="7.2" y="518.3" font-family="Liberation Sans, sans-serif" font-weight="bold" font-size="7" fill="#2a1a10" textLength="18.0" lengthAdjust="spacingAndGlyphs">BACK</text></svg>
<!--LB_E-->
<div class="docktitle" style="top:79px;"></div>
<div class="t" style="left:36px;top:81px;font-size:11px;letter-spacing:-0.38px;" id="dbt">DB Tree</div>
<svg class="abs" style="left:294px;top:83px" width="10" height="10" viewBox="0 0 10 10"><rect x="3.500" y="0.500" width="6" height="5" fill="#dcdcdc" stroke="#000"/><rect x="3" y="0" width="7" height="2" fill="#000"/><rect x="0.500" y="3.500" width="6" height="5" fill="#fff" stroke="#000"/><rect x="0" y="3" width="7" height="2" fill="#000"/></svg>
<div class="box" style="left:44px;top:108px;width:256px;height:322px;"></div>
<div class="abs" style="left:44px;top:436px;width:256px;height:25px;border:1px solid #dadada;border-radius:4px;box-sizing:border-box;background:#efefef;"></div>
<!-- selected row -->
<div class="abs" style="left:65px;top:163px;width:234px;height:18px;box-sizing:border-box;border:1px solid #84acdd;border-radius:3px;background:linear-gradient(#eaf3fd,#d3e5fa);"></div>
<div class="abs" style="left:86px;top:163px;width:212px;height:18px;box-sizing:border-box;border:1px dotted #222;"></div>
<svg class="abs" style="left:52px;top:114px" width="8" height="8" viewBox="0 0 8 8"><path d="M6.500 1 L6.500 6.500 L1 6.500 Z" fill="#595959" stroke="#262626" stroke-width="1"/></svg>
<div class="chk on" style="left:68px;top:112px;"><svg width="13" height="13" viewBox="0 0 13 13"><path d="M3.200 6.800 L5.700 10 L9.900 2.800" fill="none" stroke="#3b4daa" stroke-width="1.900" stroke-linejoin="miter"/><path d="M3 7.600 L5.600 10.300" stroke="#2c3c98" stroke-width="1.200" fill="none"/></svg></div>
<svg class="abs" style="left:87px;top:111px" width="16" height="14" viewBox="0 0 16 14"><path d="M2.800 0.300 L6.500 0.500 L9.500 2 L14.300 4.300 L14 12.800 L4 9 Z" fill="#eeb02a"/><path d="M0.300 4.300 L2 3.500 L12.600 5.300 L13.400 13.300 L12 13.600 L1.500 9.600 Z" fill="#dc9c1c"/><path d="M0.300 4.300 L2 3.500 L12.600 5.300" fill="none" stroke="#f6cc5a" stroke-width=".8"/><path d="M12.600 5.300 L13.400 13.300 L12 13.600" fill="none" stroke="#b07a10" stroke-width=".9"/></svg>
<div class="t tr" style="left:109px;top:112px;letter-spacing:-0.45px;" id="r1">ScanMHS_St_3_p1.txt (C:/PHD_C...</div>
<div class="chk" style="left:88px;top:130px;"></div>
<svg class="abs" style="left:106px;top:129px" width="17" height="14" viewBox="0 0 17 14"><defs><radialGradient id="cg1" cx="0.35" cy="0.3" r="0.8"><stop offset="0" stop-color="#ffffff"/><stop offset="1" stop-color="#b8bcc4"/></radialGradient></defs><path d="M3.800 3.500 Q5 1 8 1.600 Q10.500 -0.200 13 2.200 Q16 3 15.800 6.500 Q17 9.500 13.500 11.300 Q11 13.200 8 12.300 Q4.500 13.200 2.500 10.500 Q0 8.500 1.500 5.800 Q1.800 3.800 3.800 3.500 Z" fill="url(#cg1)" stroke="#3c3c3c" stroke-width="1.300"/><path d="M5 5 Q7 3.500 9 5.500 M9 7 Q11 5.500 13 7.500 M4.500 10 Q8 11.500 12.500 9.500" fill="none" stroke="#8a8a8a" stroke-width="1" opacity=".6"/></svg>
<div class="t tr" style="left:129px;top:130px;letter-spacing:-0.38px;" id="r2">ScanMHS_St_3_p1 - Cloud</div>
<div class="chk on" style="left:68px;top:148px;"><svg width="13" height="13" viewBox="0 0 13 13"><path d="M3.200 6.800 L5.700 10 L9.900 2.800" fill="none" stroke="#3b4daa" stroke-width="1.900" stroke-linejoin="miter"/><path d="M3 7.600 L5.600 10.300" stroke="#2c3c98" stroke-width="1.200" fill="none"/></svg></div>
<svg class="abs" style="left:86px;top:147px" width="17" height="14" viewBox="0 0 17 14"><defs><radialGradient id="cg2" cx="0.35" cy="0.3" r="0.8"><stop offset="0" stop-color="#ffffff"/><stop offset="1" stop-color="#b8bcc4"/></radialGradient></defs><path d="M3.800 3.500 Q5 1 8 1.600 Q10.500 -0.200 13 2.200 Q16 3 15.800 6.500 Q17 9.500 13.500 11.300 Q11 13.200 8 12.300 Q4.500 13.200 2.500 10.500 Q0 8.500 1.500 5.800 Q1.800 3.800 3.800 3.500 Z" fill="url(#cg2)" stroke="#3c3c3c" stroke-width="1.300"/><path d="M5 5 Q7 3.500 9 5.500 M9 7 Q11 5.500 13 7.500 M4.500 10 Q8 11.500 12.500 9.500" fill="none" stroke="#8a8a8a" stroke-width="1" opacity=".6"/></svg>
<div class="t tr" style="left:109px;top:148px;letter-spacing:-0.34px;" id="r3">ScanMHS_St_3_p1 - Cloud.extract</div>
<div class="chk on" style="left:68px;top:166px;"><svg width="13" height="13" viewBox="0 0 13 13"><path d="M3.200 6.800 L5.700 10 L9.900 2.800" fill="none" stroke="#3b4daa" stroke-width="1.900" stroke-linejoin="miter"/><path d="M3 7.600 L5.600 10.300" stroke="#2c3c98" stroke-width="1.200" fill="none"/></svg></div>
<svg class="abs" style="left:86px;top:165px" width="17" height="14" viewBox="0 0 17 14"><defs><radialGradient id="cg3" cx="0.35" cy="0.3" r="0.8"><stop offset="0" stop-color="#e8f2ff"/><stop offset="1" stop-color="#8fb4e0"/></radialGradient></defs><path d="M3.800 3.500 Q5 1 8 1.600 Q10.500 -0.200 13 2.200 Q16 3 15.800 6.500 Q17 9.500 13.500 11.300 Q11 13.200 8 12.300 Q4.500 13.200 2.500 10.500 Q0 8.500 1.500 5.800 Q1.800 3.800 3.800 3.500 Z" fill="url(#cg3)" stroke="#3c3c3c" stroke-width="1.300"/><path d="M5 5 Q7 3.500 9 5.500 M9 7 Q11 5.500 13 7.500 M4.500 10 Q8 11.500 12.500 9.500" fill="none" stroke="#8a8a8a" stroke-width="1" opacity=".6"/></svg>
<div class="t tr" style="left:109px;top:166px;letter-spacing:0.08px;" id="r4">Picking list</div>

<div class="docktitle" style="top:478px;"></div>
<div class="t" style="left:36px;top:480px;font-size:11px;letter-spacing:-0.04px;" id="prt">Properties</div>
<svg class="abs" style="left:294px;top:482px" width="10" height="10" viewBox="0 0 10 10"><rect x="3.500" y="0.500" width="6" height="5" fill="#dcdcdc" stroke="#000"/><rect x="3" y="0" width="7" height="2" fill="#000"/><rect x="0.500" y="3.500" width="6" height="5" fill="#fff" stroke="#000"/><rect x="0" y="3" width="7" height="2" fill="#000"/></svg>
<div class="box" style="left:44px;top:508px;width:256px;height:190px;overflow:hidden;" id="pbox">
 <div class="abs" style="left:0;top:0;width:238px;height:22px;background:linear-gradient(#fff 0%,#fff 45%,#f3f4f6 50%,#f1f2f4 100%);border-bottom:1px solid #d5d5d5;"></div>
 <div class="abs" style="left:115px;top:0;width:1px;height:22px;background:#dedfe1;"></div>
 <div class="abs" style="left:0;top:23px;width:238px;height:17px;background:#808080;"></div>
 <div class="abs" style="left:0;top:40px;width:238px;height:17px;background:#f7f7f7;"></div>
 <div class="abs" style="left:0;top:74px;width:238px;height:17px;background:#f7f7f7;"></div>
 <div class="abs" style="left:0;top:108px;width:238px;height:17px;background:#f7f7f7;"></div>
 <div class="abs" style="left:0;top:147px;width:238px;height:45px;background:#f7f7f7;"></div>
 <!-- scrollbar -->
 <div class="abs" style="left:238px;top:0;width:17px;height:188px;background:#f0f0f0;"></div>
 <div class="abs" style="left:239px;top:17px;width:14px;height:70px;box-sizing:border-box;border:1px solid #979797;border-radius:2px;background:linear-gradient(90deg,#f3f3f3 0%,#e6e6e8 45%,#d4d4d8 50%,#dcdcdf 100%);"></div>
 <div class="abs" style="left:242px;top:48px;width:8px;height:1px;background:#606060;box-shadow:0 2px 0 #606060,0 4px 0 #606060,0 6px 0 #606060;"></div>
 <svg class="abs" style="left:242px;top:6px" width="8" height="5" viewBox="0 0 8 5"><path d="M0 4.500 L4 0.500 L8 4.500 Z" fill="#404040"/></svg>
 <svg class="abs" style="left:242px;top:178px" width="8" height="5" viewBox="0 0 8 5"><path d="M0 0.500 L4 4.500 L8 0.500 Z" fill="#404040"/></svg>
</div>
<div class="t" style="left:49px;top:513px;letter-spacing:-0.06px;" id="p0">Property</div>
<div class="t" style="left:164px;top:513px;letter-spacing:-0.11px;" id="p1">State/Value</div>
<div class="t" style="left:48px;top:533px;color:#fff;letter-spacing:-0.13px;" id="p2">CC Object</div>
<div class="t" style="left:48px;top:550px;letter-spacing:0.12px;" id="p3">Name</div><div class="t" style="left:163px;top:550px;letter-spacing:0.07px;" id="p4">Picking list</div>
<div class="t" style="left:48px;top:567px;letter-spacing:-0.13px;" id="p5">Unique ID</div><div class="t" style="left:163px;top:567px;letter-spacing:-0.31px;" id="p6">116</div>
<div class="t" style="left:48px;top:584px;letter-spacing:0.11px;" id="p7">Children</div><div class="t" style="left:163px;top:584px;letter-spacing:0.01px;" id="p8">0</div>
<div class="t" style="left:48px;top:601px;letter-spacing:-0.08px;" id="p9">Visible</div><div class="chk on" style="left:163px;top:601px;"><svg width="13" height="13" viewBox="0 0 13 13"><path d="M3.200 6.800 L5.700 10 L9.900 2.800" fill="none" stroke="#3b4daa" stroke-width="1.900" stroke-linejoin="miter"/><path d="M3 7.600 L5.600 10.300" stroke="#2c3c98" stroke-width="1.200" fill="none"/></svg></div>
<div class="t" style="left:48px;top:618px;letter-spacing:-0.18px;" id="p10">Show name (in 3D)</div><div class="chk" style="left:163px;top:618px;"></div>
<div class="t" style="left:48px;top:637px;letter-spacing:-0.08px;" id="p11">Current Display</div>
<div class="abs" style="left:160px;top:634px;width:122px;height:20px;box-sizing:border-box;border:1px solid #707070;border-radius:3px;background:linear-gradient(#f2f2f2 0%,#ebebeb 48%,#dddddd 52%,#cfcfcf 100%);box-shadow:inset 0 0 0 1px #fcfcfc;"></div>
<div class="t" style="left:163px;top:637px;letter-spacing:-0.36px;" id="p12">3D View 1</div>
<svg class="abs" style="left:267px;top:641px" width="9" height="6" viewBox="0 0 9 6"><path d="M0.500 0.500 L8.500 0.500 L4.500 5 Z" fill="#000"/></svg>
<div class="t" style="left:48px;top:671px;letter-spacing:-0.09px;" id="p13">Box dimensions</div>
<div class="t" style="left:163px;top:656px;letter-spacing:-0.48px;" id="p14">X: 8.711</div>
<div class="t" style="left:163px;top:671px;letter-spacing:-0.47px;" id="p15">Y: 19.315</div>
<div class="abs" style="left:163px;top:686px;height:11px;overflow:hidden;width:80px;"><div class="t" style="left:0;top:0;letter-spacing:-0.50px;" id="p16">Z: 3.801</div></div>

<!--SCENE_S--><svg class="abs" style="left:313px;top:77px" width="1053" height="631" viewBox="313 77 1053 631">
<defs>
<filter id="pc" x="-5%" y="-5%" width="110%" height="110%" color-interpolation-filters="sRGB">
 <feGaussianBlur in="SourceAlpha" stdDeviation="2.5" result="d"/>
 <feComponentTransfer in="d" result="dm"><feFuncA type="linear" slope="6" intercept="-0.05"/></feComponentTransfer>
 <feTurbulence type="fractalNoise" baseFrequency="0.61 0.57" numOctaves="2" seed="4" result="t1"/>
 <feColorMatrix in="t1" type="matrix" values="0 0 0 0 0  0 0 0 0 0  0 0 0 0 0  3 0 0 0 -1" result="hi"/>
 <feTurbulence type="fractalNoise" baseFrequency="0.11 0.045" numOctaves="3" seed="11" result="t2"/>
 <feColorMatrix in="t2" type="matrix" values="0 0 0 0 0  0 0 0 0 0  0 0 0 0 0  2.6 0 0 0 -0.8" result="lo"/>
 <feComposite in="d" in2="lo" operator="arithmetic" k1="0" k2="0.4" k3="0.3" k4="0" result="m1"/>
 <feComposite in="m1" in2="hi" operator="arithmetic" k1="0" k2="1" k3="0.3" k4="0" result="m2"/>
 <feComponentTransfer in="m2" result="mask0"><feFuncA type="linear" slope="40" intercept="-20"/></feComponentTransfer>
 <feComposite in="mask0" in2="dm" operator="in" result="mask"/>
 <feFlood flood-color="#0a16f8" result="c"/>
 <feComposite in="c" in2="mask" operator="in"/>
</filter>
<filter id="pcg" x="-5%" y="-5%" width="110%" height="110%" color-interpolation-filters="sRGB">
 <feGaussianBlur in="SourceAlpha" stdDeviation="6" result="d"/>
 <feComponentTransfer in="d" result="dm"><feFuncA type="linear" slope="6" intercept="-0.05"/></feComponentTransfer>
 <feTurbulence type="fractalNoise" baseFrequency="0.67 0.59" numOctaves="2" seed="23" result="t1"/>
 <feColorMatrix in="t1" type="matrix" values="0 0 0 0 0  0 0 0 0 0  0 0 0 0 0  0 3 0 0 -1" result="hi"/>
 <feTurbulence type="fractalNoise" baseFrequency="0.05" numOctaves="2" seed="5" result="t2"/>
 <feColorMatrix in="t2" type="matrix" values="0 0 0 0 0  0 0 0 0 0  0 0 0 0 0  2.6 0 0 0 -0.8" result="lo"/>
 <feComposite in="d" in2="lo" operator="arithmetic" k1="0" k2="0.4" k3="0.25" k4="0" result="m1"/>
 <feComposite in="m1" in2="hi" operator="arithmetic" k1="0" k2="1" k3="0.35" k4="0" result="m2"/>
 <feComponentTransfer in="m2" result="mask0"><feFuncA type="linear" slope="40" intercept="-25.6"/></feComponentTransfer>
 <feComposite in="mask0" in2="dm" operator="in" result="mask"/>
 <feFlood flood-color="#20d070" result="c"/>
 <feComposite in="c" in2="mask" operator="in"/>
</filter>
<filter id="spk" x="-5%" y="-5%" width="110%" height="110%" color-interpolation-filters="sRGB">
 <feTurbulence type="fractalNoise" baseFrequency="0.7 0.6" numOctaves="2" seed="9" result="t"/>
 <feColorMatrix in="t" type="matrix" values="0 0 0 0 0  0 0 0 0 0  0 0 0 0 0  0 0 14 0 -5.1" result="m"/>
 <feComposite in="SourceGraphic" in2="m" operator="in"/>
</filter>
<radialGradient id="fan" gradientUnits="userSpaceOnUse" cx="821" cy="494" r="150" gradientTransform="translate(821 494) scale(1 0.62) translate(-821 -494)">
 <stop offset="0" stop-color="#ff1000"/><stop offset="0.12" stop-color="#ff3000"/><stop offset="0.22" stop-color="#ffe800"/><stop offset="0.32" stop-color="#a8ff00"/><stop offset="0.48" stop-color="#20f020"/><stop offset="0.62" stop-color="#10d090"/><stop offset="0.78" stop-color="#1060f0"/><stop offset="1" stop-color="#0a16f8"/>
</radialGradient>
<linearGradient id="esr" gradientUnits="userSpaceOnUse" x1="0" y1="110" x2="0" y2="650"><stop offset="0" stop-color="#9c2d3c"/><stop offset="1" stop-color="#ba2020"/></linearGradient>
<linearGradient id="esg" gradientUnits="userSpaceOnUse" x1="0" y1="110" x2="0" y2="650"><stop offset="0" stop-color="#18b040"/><stop offset="1" stop-color="#22ba22"/></linearGradient>
<linearGradient id="esb" gradientUnits="userSpaceOnUse" x1="0" y1="110" x2="0" y2="650"><stop offset="0" stop-color="#1a8fd0"/><stop offset="1" stop-color="#3092d2"/></linearGradient>
</defs>
<g fill="none" stroke-width="2.8" stroke-linecap="round">
<ellipse cx="836" cy="417.100" rx="277.700" ry="118.600" transform="rotate(9.3 836 417.100)" stroke="url(#esb)"/>
<ellipse cx="868.900" cy="379.500" rx="274.600" ry="208.300" transform="rotate(66.5 868.900 379.500)" stroke="url(#esr)"/>
<ellipse cx="813.300" cy="379.500" rx="277.300" ry="144.200" transform="rotate(-64.8 813.300 379.500)" stroke="url(#esg)"/>
<path d="M883 122.600 L804.300 612.600" stroke="url(#esb)"/>
<path d="M638.400 474.800 L980.400 335.100" stroke="url(#esr)"/>
<path d="M649.900 303.700 L1078.800 504" stroke="url(#esg)"/>
</g>
<mask id="hm" maskUnits="userSpaceOnUse" x="690" y="180" width="460" height="340"><rect x="690" y="180" width="460" height="340" fill="#fff"/><g fill="#000" fill-opacity=".72"><polygon points="925,318 964,321 975,343 932,341"/><polygon points="986,337 1064,350 1068,377 1031,378 989,371"/><polygon points="972,375 1003,378 1000,397 970,395"/><polygon points="931,392 956,397 953,406 928,403"/><polygon points="1087,347 1095,348 1095,366 1087,364"/><polygon points="1102,350 1108,351 1108,368 1102,367"/><polygon points="749,307 761,306 762,343 750,351"/><polygon points="772,312 799,314 804,343 780,354 769,338"/><polygon points="829,300 856,306 852,381 838,381 833,343"/><polygon points="1010,400 1050,398 1052,410 1012,414"/><polygon points="905,300 925,303 926,314 906,312"/></g></mask>
<g filter="url(#pc)"><g mask="url(#hm)"><polygon points="706,200 760,190 850,200 856,280 720,290 706,250" fill="#000" fill-opacity="0.14" /><polygon points="725,300 860,290 880,280 940,284 1000,310 1120,338 1122,380 1095,395 1085,425 1005,442 975,458 940,466 905,450 860,425 800,400 730,395 722,350" fill="#000" fill-opacity="0.38" /><polygon points="739,238 779,224 836,233 849,260 845,290 801,295 743,268" fill="#000" fill-opacity="0.98" /><polygon points="752,226 800,216 840,228 846,246 748,246" fill="#000" fill-opacity="0.45" /><polygon points="718,256 732,256 732,272 718,272" fill="#000" fill-opacity="0.80" /><polygon points="728,306 750,304 752,353 730,357" fill="#000" fill-opacity="0.90" /><polygon points="714,335 728,335 728,351 714,351" fill="#000" fill-opacity="0.75" /><polygon points="761,304 845,295 849,357 823,375 779,370 756,348" fill="#000" fill-opacity="0.80" /><polygon points="758,350 800,350 812,392 770,396 752,372" fill="#000" fill-opacity="0.55" /><polygon points="860,308 876,291 911,284 938,291 956,295 973,304 1000,317 1044,326 1089,333 1117,344 1115,375 1089,388 1080,419 1058,428 1000,437 973,455 938,460 900,455 866,430 856,380" fill="#000" fill-opacity="0.86" /><polygon points="864,300 960,304 978,400 944,450 884,452 858,410" fill="#000" fill-opacity="0.97" /><polygon points="1062,336 1118,345 1114,374 1088,392 1066,388" fill="#000" fill-opacity="0.97" /><polygon points="990,400 1070,396 1078,420 1000,436" fill="#000" fill-opacity="0.92" /><polygon points="840,330 862,320 862,410 840,396" fill="#000" fill-opacity="0.50" /><polygon points="735,392 760,384 830,382 862,420 905,452 880,470 822,488 790,470 752,428" fill="#000" fill-opacity="0.92" /></g></g>
<g filter="url(#pcg)"><polygon points="868,330 950,340 960,420 930,455 880,455 860,400" fill="#000" fill-opacity="0.62" /><polygon points="770,385 830,380 880,440 850,470 790,440" fill="#000" fill-opacity="0.60" /></g>
<polygon points="754,426 772,420 800,415 860,425 905,450 940,465.500 822,493 796,485" fill="url(#fan)"/>
<g fill="none" stroke-linecap="round" filter="url(#spk)">
<path d="M765 392 L767 436 M777 390 L780 436" stroke="#28c878" stroke-width="3.500"/>
<path d="M784.500 426 V402 Q792 393 801 402 L802 428" stroke="#7ae838" stroke-width="3"/>
<path d="M802 404 Q810 396 817 405 L818 424" stroke="#58e040" stroke-width="2.800"/>
<path d="M822 418 L824 446" stroke="#ff5a10" stroke-width="5"/>
<path d="M839 420 L841 453" stroke="#ff8a10" stroke-width="5.500"/>
<path d="M856 416 L857 446" stroke="#ff4a10" stroke-width="5"/>
<path d="M858 418 Q868 408 878 420 L879.500 446" stroke="#60e040" stroke-width="3"/>
<path d="M881 422 Q896 412 910 426 L911.500 455" stroke="#50e048" stroke-width="3"/>
</g>
<circle cx="836.700" cy="404" r="7.500" fill="#48d848"/><circle cx="837.500" cy="407" r="3.500" fill="#f0c020"/><circle cx="835" cy="410" r="1.800" fill="#ff3010"/>
<g fill="#0a16f8"><polygon points="785,425 793,425 801,472 796,472"/><polygon points="806,426 817,426 818,440 808,444"/><polygon points="842,430 852,428 852,450 846,452"/><polygon points="862,432 876,432 874,448 862,446"/></g>
<g fill="#ff2a10"><circle cx="814" cy="480" r="1.200"/><circle cx="820" cy="476" r="1.200"/><circle cx="808" cy="474" r="1"/><circle cx="826" cy="470" r="1.200"/><circle cx="834" cy="474" r="1"/></g>
<circle cx="838.500" cy="388" r="6.500" fill="#b89a20"/><circle cx="836.500" cy="386" r="3.500" fill="#d8c040" fill-opacity=".7"/>
<g fill="none" stroke="#e6ee4c" stroke-width="1.150">
<path d="M816.200 383.400 L910.900 433.200 L881.600 445.900 L784 398.100 Z"/>
<path d="M817.200 401 L911.900 451.800 L878.700 467.400 L785.900 416.600 Z"/>
<path d="M816.200 383.400 L817.200 401 M910.900 433.200 L911.900 451.800 M881.600 445.900 L878.700 467.400 M784 398.100 L785.900 416.600"/>
</g>
<g fill="none" stroke-width="2.8" stroke-linecap="round">
<path d="M962.100 400 Q946 438 927.500 471.100 L905.600 507.600" stroke="url(#esg)"/>
<path d="M1066 307.800 L1077 340.600 L1083.500 380 Q1086.500 392 1089 416.500" stroke="url(#esr)" stroke-opacity=".9"/>
<path d="M1078.800 504 L920.200 431" stroke="url(#esg)"/>
<path d="M648.600 304.200 L760 352" stroke="url(#esg)" stroke-opacity=".9"/>
<path d="M951.200 346 L980.400 335.100" stroke="#c0262e"/>
<path d="M638.400 474.800 L753.300 429.200" stroke="url(#esr)"/>
<path d="M883 122.600 L845 350" stroke="url(#esb)" stroke-opacity=".75"/>
<path d="M722 293.200 Q759 291 795 292.100 Q818 294 840 296.900 Q876 303 913 313.300 Q950 324 980.400 335.100" stroke="url(#esb)" stroke-opacity=".55"/>
<path d="M980.400 335.100 Q1015 351 1044 366.100 L1058.700 375.200" stroke="url(#esb)" stroke-opacity=".8"/>
</g>
<g fill="#e8e020"><rect x="802" y="504" width="2" height="2"/><rect x="1021" y="447" width="1.500" height="1.500"/><rect x="1041" y="448" width="1.500" height="1.500"/><rect x="772" y="479" width="1.500" height="1.500"/></g>
<g fill="none" stroke-width="2" stroke-linecap="butt">
<path d="M1330.500 677.800 L1334.600 655.500" stroke="#35a8f0"/>
<path d="M1330.500 677.800 L1315.500 684.200" stroke="#f01818"/>
<path d="M1330.500 677.800 L1350.600 687.400" stroke="#18e828"/>
</g>
<text x="327.500" y="107" font-family="Liberation Sans, sans-serif" font-size="16.500" fill="#7cc444" fill-opacity=".88" textLength="123" lengthAdjust="spacingAndGlyphs">Default point size</text>
<rect x="467" y="100" width="15" height="3" fill="#86c440"/>
<rect x="499.500" y="100" width="14.500" height="3" fill="#86c440"/><rect x="505.200" y="94.500" width="3" height="14" fill="#86c440"/>
<rect x="491" y="101" width="1" height="1" fill="#86c440" fill-opacity=".6"/>
<rect x="313" y="77" width="1" height="631" fill="#000" fill-opacity=".35"/>
</svg>
<!--SCENE_E-->
<div class="abs" style="left:158px;top:173px;width:181px;height:284px;box-sizing:border-box;background:#f0f0f0;border:1px solid #979797;box-shadow:2px 2px 3px rgba(0,0,0,.45);"></div>
<div class="abs" style="left:187px;top:176px;width:1px;height:278px;background:#e2e3e3;"></div><div class="abs" style="left:188px;top:176px;width:1px;height:278px;background:#fff;"></div>
<div class="abs" style="left:189px;top:203px;width:147px;height:1px;background:#e0e0e0;"></div><div class="abs" style="left:189px;top:204px;width:147px;height:1px;background:#fff;"></div>
<div class="abs" style="left:189px;top:344px;width:147px;height:1px;background:#e0e0e0;"></div><div class="abs" style="left:189px;top:345px;width:147px;height:1px;background:#fff;"></div>
<div class="abs" style="left:189px;top:375px;width:147px;height:1px;background:#e0e0e0;"></div><div class="abs" style="left:189px;top:376px;width:147px;height:1px;background:#fff;"></div>
<div class="abs" style="left:189px;top:406px;width:147px;height:1px;background:#e0e0e0;"></div><div class="abs" style="left:189px;top:407px;width:147px;height:1px;background:#fff;"></div>
<div class="t" style="left:194px;top:180px;letter-spacing:0.05px;" id="c0">Information (recursive)</div>
<div class="t" style="left:194px;top:211px;letter-spacing:0.05px;" id="c1">Toggle</div>
<div class="t" style="left:194px;top:233px;letter-spacing:0.07px;" id="c2">Toggle visibility</div>
<div class="t" style="left:194px;top:255px;letter-spacing:0.08px;" id="c3">Toggle color</div>
<div class="t" style="left:194px;top:277px;letter-spacing:0.02px;" id="c4">Toggle normals</div>
<div class="t" style="left:194px;top:299px;letter-spacing:-0.37px;" id="c5">Toggle SF</div>
<div class="t" style="left:194px;top:321px;letter-spacing:-0.09px;" id="c6">Toggle 3D name</div>
<div class="t" style="left:194px;top:352px;letter-spacing:-0.16px;" id="c7">Delete</div>
<div class="t" style="left:194px;top:383px;letter-spacing:0.19px;" id="c8">Add empty group</div>
<div class="t" style="left:194px;top:414px;letter-spacing:-0.19px;" id="c9">Expand branch</div>
<div class="t" style="left:194px;top:436px;letter-spacing:-0.10px;" id="c10">Collapse branch</div>

<!--TK_S--><svg class="abs" style="left:0;top:728px" width="1366" height="40" viewBox="0 728 1366 40">
<defs>
<linearGradient id="tbg" x1="0" y1="0" x2="0" y2="1"><stop offset="0" stop-color="#5a6876"/><stop offset=".04" stop-color="#34414d"/><stop offset=".5" stop-color="#2a353f"/><stop offset="1" stop-color="#222b33"/></linearGradient>
<linearGradient id="tbl" x1="0" y1="0" x2="1" y2="0"><stop offset="0" stop-color="#243a4a"/><stop offset=".22" stop-color="#22303c"/><stop offset=".5" stop-color="#2a333c"/><stop offset="1" stop-color="#2b3138"/></linearGradient>
<linearGradient id="btn" x1="0" y1="0" x2="0" y2="1"><stop offset="0" stop-color="#fff" stop-opacity=".42"/><stop offset=".5" stop-color="#fff" stop-opacity=".28"/><stop offset=".52" stop-color="#fff" stop-opacity=".16"/><stop offset="1" stop-color="#fff" stop-opacity=".22"/></linearGradient>
<linearGradient id="btna" x1="0" y1="0" x2="0" y2="1"><stop offset="0" stop-color="#ececec"/><stop offset=".5" stop-color="#d6d6d6"/><stop offset=".52" stop-color="#bcbec0"/><stop offset="1" stop-color="#cccfd2"/></linearGradient>
<radialGradient id="orb" cx=".5" cy=".75" r=".75"><stop offset="0" stop-color="#7fd8ff"/><stop offset=".35" stop-color="#2a8ad0"/><stop offset=".75" stop-color="#153a78"/><stop offset="1" stop-color="#0a1a40"/></radialGradient>
<radialGradient id="ff" cx=".45" cy=".4" r=".6"><stop offset="0" stop-color="#ffd23a"/><stop offset=".6" stop-color="#f0801a"/><stop offset="1" stop-color="#c8400a"/></radialGradient>
</defs>
<rect x="0" y="728" width="1366" height="40" fill="url(#tbl)"/>
<rect x="0" y="728" width="1366" height="40" fill="url(#tbg)" fill-opacity=".55"/>
<rect x="0" y="728" width="1366" height="1" fill="#1a2028"/><rect x="0" y="729" width="1366" height="1" fill="#6a7886" fill-opacity=".8"/>
<path d="M690 768 Q760 738 830 742 Q900 752 960 768 Z" fill="#fff" fill-opacity=".04"/>
<path d="M700 730 Q800 760 920 735 L1000 730 Z" fill="#fff" fill-opacity=".03"/>
<circle cx="27" cy="748" r="19.500" fill="#1a2430" fill-opacity=".6"/><circle cx="27" cy="748" r="18" fill="url(#orb)" stroke="#9ad0f0" stroke-opacity=".6" stroke-width="1.200"/>
<path d="M10 742 Q27 728 44 742 Q27 748 10 742 Z" fill="#fff" fill-opacity=".28"/>
<path d="M18.500 740 Q22.500 737.500 26 739.500 L24.500 746.500 Q21 744.500 17 747 Z" fill="#f0582a"/>
<path d="M27.500 740 Q31 742.500 36 740 L34 747 Q30 749.500 26 747 Z" fill="#8cc63e"/>
<path d="M16.500 748.500 Q20.500 746 24 748 L22.500 755.500 Q19 753.500 15 756 Z" fill="#2aa0e8"/>
<path d="M25.500 749 Q29 751.500 33.500 749 L32 756 Q28 758.500 24 756 Z" fill="#fbc31c"/>
<rect x="113.500" y="730.500" width="3" height="35" fill="#fff" fill-opacity=".12" stroke="#c8d0d8" stroke-opacity=".5"/><rect x="60.5" y="729.500" width="53" height="37" rx="2.500" fill="url(#btn)" stroke="#b4bcc4" stroke-opacity=".6" stroke-width="1"/><rect x="61.5" y="730.500" width="51" height="35" rx="2" fill="none" stroke="#10161c" stroke-opacity=".5"/><path d="M62 766 L90 731 L112 731 L112 766 Z" fill="#000" fill-opacity=".12"/><path d="M70 741 L71 738 H82 L84 741 H102 V762 H70 Z" fill="#f2d27a" stroke="#c9a13a" stroke-width=".8"/><rect x="73" y="736.500" width="4" height="2.500" fill="#3cb04a"/><rect x="80" y="738" width="4" height="2.500" fill="#d83a2a"/><rect x="89" y="739.500" width="4" height="2.500" fill="#2a7ad8"/><path d="M70 745 H102" stroke="#fbe8a8" stroke-width="1.500"/>
<path d="M75 752 H98 L100 766 H95 V758 H78 V766 H73 Z" fill="#a8d4f4" stroke="#5a9ad0" stroke-width="1" fill-opacity=".95"/><path d="M76 754 H97" stroke="#e8f6ff" stroke-width="1.400"/><path d="M141 737 L160 735.500 L163 737 V761 L160 763 L141 761.500 Z" fill="#7ab4e4"/><path d="M137.500 738 L158 736 V762 L137.500 760 Z" fill="#9ccaf0" stroke="#5a94c8" stroke-width=".8"/><circle cx="148.500" cy="749" r="8.500" fill="#f07820" stroke="#fff" stroke-width="1.400"/><path d="M145.500 744 L153.500 749 L145.500 754 Z" fill="#fff"/><path d="M207 736 L227 738 L222 764 L201 761 Z" fill="#e8ecf0" stroke="#98a4b0" stroke-width=".8"/><path d="M222 764 L227 738 L229 758 Z" fill="#d8c890"/><path d="M206 737 L222 738.500 L218 760 L197 756 Z" fill="#3a90a8"/><path d="M206 737 L222 738.500 L218 760 L197 756 Z" fill="url(#btn)"/><path d="M207 736 l1.500 -2 M210 736.300 l1.500 -2 M213 736.600 l1.500 -2 M216 736.900 l1.500 -2 M219 737.200 l1.500 -2 M222 737.500 l1.500 -2" stroke="#d0d8e0" stroke-width="1"/><text x="261.500" y="761.500" font-family="Liberation Sans, sans-serif" font-weight="bold" font-size="47" fill="#2fb0f0" textLength="27" lengthAdjust="spacingAndGlyphs">e</text><path d="M267 761 Q256 750 270 739.500 Q282 731 290 733.500" fill="none" stroke="#f2c21a" stroke-width="2.800" stroke-linecap="round"/><path d="M262 750 Q261 756 266 760" fill="none" stroke="#f2c21a" stroke-width="2"/><rect x="308.5" y="729.500" width="57" height="37" rx="2.500" fill="url(#btn)" stroke="#b4bcc4" stroke-opacity=".6" stroke-width="1"/><rect x="309.5" y="730.500" width="55" height="35" rx="2" fill="none" stroke="#10161c" stroke-opacity=".5"/><path d="M310 766 L338 731 L364 731 L364 766 Z" fill="#000" fill-opacity=".12"/><circle cx="337" cy="748" r="14.500" fill="url(#ff)"/><circle cx="339" cy="744.500" r="9.500" fill="#1f4fc4"/><path d="M331.500 740 Q336 735.500 343 737 Q347 739 348 743 Q343 740 339 742 Q336 743 335 746 Q332 744 331.500 740 Z" fill="#5aa6ee"/><path d="M322.500 744 Q323 738 327 735 Q327 739 329.500 741 Q333 741.500 335.500 744 Q339 745 338 748 Q335.500 750.500 337 752.500 Q341 755 346 752 Q349.500 749 350 744 Q353 752 347.500 758.500 Q341 764 332.500 761.500 Q323.500 757 322.500 744 Z" fill="#f07a18"/><path d="M346 752 Q349.500 749 350 744 Q352.500 751 348 757.500 Q344 761 340 761.500 Q346 758 346 752 Z" fill="#ffc42a"/><path d="M324 737.500 L327.500 741 L324.500 746 Z" fill="#e2640e"/><rect x="370.5" y="729.500" width="57" height="37" rx="2.500" fill="url(#btn)" stroke="#b4bcc4" stroke-opacity=".6" stroke-width="1"/><rect x="371.5" y="730.500" width="55" height="35" rx="2" fill="none" stroke="#10161c" stroke-opacity=".5"/><path d="M372 766 L400 731 L426 731 L426 766 Z" fill="#000" fill-opacity=".12"/><path d="M386 742 Q386 734 394 734 Q400 733 404 737 Q412 738 412 747 Q414 756 406 760 Q398 764 392 759 Q384 756 386 748 Z" fill="#18a8e8"/><text x="391" y="758" font-family="Liberation Sans, sans-serif" font-weight="bold" font-size="26" fill="#fff">S</text><ellipse cx="407" cy="756" rx="7.500" ry="6" fill="#8cc83c" stroke="#fff" stroke-width="1.200"/><ellipse cx="407" cy="756" rx="4" ry="3" fill="#f4fae8"/><rect x="432.5" y="729.500" width="57" height="37" rx="2.500" fill="url(#btn)" stroke="#b4bcc4" stroke-opacity=".6" stroke-width="1"/><rect x="433.5" y="730.500" width="55" height="35" rx="2" fill="none" stroke="#10161c" stroke-opacity=".5"/><path d="M434 766 L462 731 L488 731 L488 766 Z" fill="#000" fill-opacity=".12"/><rect x="444.500" y="732" width="32" height="32" fill="#d8482a"/><path d="M454.500 741 V754" stroke="#fff" stroke-width="1.600" fill="none"/><ellipse cx="461.500" cy="751.300" rx="7.200" ry="4.800" fill="none" stroke="#fff" stroke-width="1.600"/><rect x="494.5" y="729.500" width="57" height="37" rx="2.500" fill="url(#btn)" stroke="#b4bcc4" stroke-opacity=".6" stroke-width="1"/><rect x="495.5" y="730.500" width="55" height="35" rx="2" fill="none" stroke="#10161c" stroke-opacity=".5"/><path d="M496 766 L524 731 L550 731 L550 766 Z" fill="#000" fill-opacity=".12"/><path d="M507 750 L517 744 L522 748 L514 756 Z" fill="#3a78c8"/><path d="M514 756 L522 748 L528 734 Q532 742 538 757 Q532 752 527 754 Q522 760 520 762 Z" fill="#e8601a"/><path d="M528 734 Q531 742 538 757 Q533 752 530 752 Z" fill="#a82a10"/><path d="M517 744 L526 736 L528 734 L522 748 Z" fill="#58a0d8"/><rect x="556.5" y="729.500" width="57" height="37" rx="2.500" fill="url(#btn)" stroke="#b4bcc4" stroke-opacity=".6" stroke-width="1"/><rect x="557.5" y="730.500" width="55" height="35" rx="2" fill="none" stroke="#10161c" stroke-opacity=".5"/><path d="M558 766 L586 731 L612 731 L612 766 Z" fill="#000" fill-opacity=".12"/><path d="M572 744 L578 736 L590 733 L596 737 L592 760 L582 764 L574 758 Z" fill="#6aa4dc"/><path d="M572 744 L582 748 L582 764 L574 758 Z" fill="#3a78c0"/><path d="M582 748 L596 737 L592 760 L582 764 Z" fill="#9ac4ec"/><path d="M578 736 L586 740 L584 756" stroke="#d8e8f8" stroke-width="1.400" fill="none"/><circle cx="596" cy="755" r="2.200" fill="#e01818"/><path d="M586 742 L596 755" stroke="#c03030" stroke-width=".7"/><rect x="618.5" y="729.500" width="57" height="37" rx="2.500" fill="url(#btna)" stroke="#f8f8f8" stroke-width="1"/><path d="M619 766 L648 740 L648 766 Z" fill="#888" fill-opacity=".35"/><rect x="631" y="732" width="32" height="32" fill="#dedede"/><g fill="none" stroke="#0a5a96"><path d="M646 741 A8 9.500 0 1 0 646 755" stroke-width="3"/><path d="M660 741.500 A9 9.500 0 1 0 660 754.500" stroke-width="3.200"/><path d="M652 742.500 A6.500 7.500 0 0 0 652 753.500" stroke-width="1.800"/></g><path d="M1159.500 751 L1163.500 746.500 L1167.500 751 Z" fill="#fff"/>
<g fill="#fff"><rect x="1180.500" y="741.500" width="1.600" height="15"/><path d="M1183 742.500 Q1187 741 1190 743.500 L1195.500 743 L1194 748 Q1190 750 1187 748 L1183 749 Z"/></g>
<g fill="none" stroke="#fff" stroke-width="1.400"><rect x="1205" y="744" width="8" height="11" rx="1"/><path d="M1207 742 h4"/></g><path d="M1210 746 h6 v4 q-1 3 -3 3 q-2 0 -3 -3 Z M1211.500 743 v3 M1214.500 743 v3 M1213 753 v3" fill="#fff" stroke="#fff" stroke-width="1.100"/>
<g fill="#fff"><rect x="1229" y="752" width="2" height="2.500"/><rect x="1232" y="750" width="2" height="4.500"/><rect x="1235" y="748" width="2" height="6.500"/><rect x="1238" y="745.500" width="2" height="9"/><rect x="1241" y="743" width="2" height="11.500"/></g>
<path d="M1252.500 746.500 H1255 L1259 742 V756 L1255 752 H1252.500 Z" fill="#fff"/><circle cx="1263" cy="752" r="4.200" fill="#e01818" stroke="#fff" stroke-width=".8"/><path d="M1260.500 754.500 L1265.500 749.500" stroke="#fff" stroke-width="1.300"/>
<rect x="1352.500" y="729.500" width="14" height="38" fill="#fff" fill-opacity=".12" stroke="#a8b0b8" stroke-opacity=".7"/>
</svg>
<div class="t" style="left:1128px;top:738px;color:#fff;letter-spacing:-0.24px;" id="k0">DE</div>
<div class="t" style="left:1299px;top:734px;color:#fff;letter-spacing:-0.43px;" id="k1">12:44</div>
<div class="t" style="left:1285px;top:750px;color:#fff;letter-spacing:-0.47px;" id="k2">21.11.2013</div>
<!--TK_E-->
</body>
</html>
